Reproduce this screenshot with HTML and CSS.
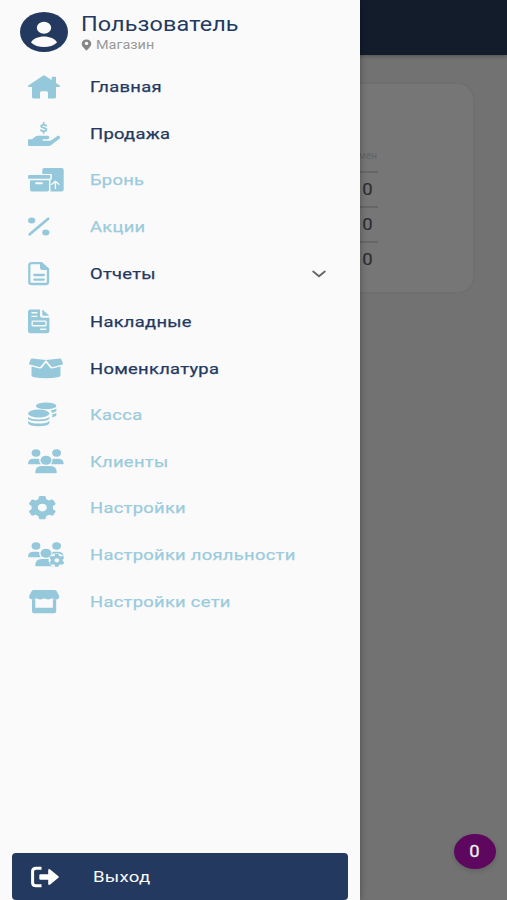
FILE: index.html
```html
<!DOCTYPE html>
<html lang="ru">
<head>
<meta charset="utf-8">
<meta name="viewport" content="width=device-width, initial-scale=1">
<title>Меню</title>
<link rel="stylesheet" href="styles.css">
</head>
<body>
<div class="app">
  <main class="page">
    <header class="topbar"></header>
    <section class="card">
      <table class="stats">
        <thead><tr><th>мен</th></tr></thead>
        <tbody><tr><td><span>0</span></td></tr><tr><td><span>0</span></td></tr><tr><td><span>0</span></td></tr></tbody>
      </table>
    </section>
  </main>
  <button class="fab"><span>0</span></button>
  <aside class="drawer">
    <div class="user">
      <svg class="avatar" viewBox="0 0 48 40"><ellipse cx="24" cy="20" rx="24" ry="20" fill="#24395f"/><ellipse cx="24" cy="15.8" rx="7.2" ry="6" fill="#fafafa"/><path d="M11 30.5c1.500-3.800 7.500-6 13-6s11.500 2.200 13 6c-3.200 3-7.800 4.500-13 4.500s-9.800-1.500-13-4.500z" fill="#fafafa"/></svg>
      <div>
        <div class="name"><span>Пользователь</span></div>
        <div class="shop"><svg class="pin" viewBox="0 0 12 13"><path fill-rule="evenodd" d="M6 .5C2.800.500.800 2.400.800 5c0 3 3.500 5.500 5.200 7.800C7.700 10.500 11.200 8 11.200 5 11.200 2.400 9.200.500 6 .500zM6 3a2 1.800 0 1 1 0 3.600A2 1.800 0 0 1 6 3z"/></svg><span>Магазин</span></div>
      </div>
    </div>
    <nav class="menu">
      <a class="item"><svg class="icon" viewBox="0 0 40 28"><path d="M17 2.700q1-.8 2 0L25.700 7V4.600q0-.8.800-.8h2.700q.8 0 .8.800v5.300l3.700 2.500q.6.500.3 1.200-.2.500-1 .5h-3v9.800q0 1.600-1.800 1.600H22v-5.800q0-1.500-1.500-1.500h-5q-1.500 0-1.500 1.500v5.800H7.800Q6 25.500 6 23.900v-9.800H3q-.8 0-1-.5-.3-.7.300-1.200z"/></svg><span>Главная</span></a>
      <a class="item"><svg class="icon" viewBox="0 0 40 28"><g transform="translate(2 -1) scale(.0556 .0525)"><path d="M565.300 328.100c-11.800-10.700-30.200-10-42.600 0L430.300 402c-11.300 9.100-25.400 14-40 14H272c-8.800 0-16-7.200-16-16s7.200-16 16-16h78.300c15.900 0 30.700-10.900 33.300-26.600 3.300-20-12.100-37.400-31.600-37.400H192c-27 0-53.100 9.300-74.100 26.300L71.400 384H16c-8.800 0-16 7.200-16 16v96c0 8.800 7.200 16 16 16h356.800c14.500 0 28.600-4.900 40-14L564 377c15.200-12.100 16.400-35.300 1.300-48.900z"/></g><path class="line" d="M20.300 5.600c-1-1-5.200-1.200-5.200.7 0 2 5.400 1.200 5.400 3.300 0 2-4.600 1.900-5.700.5M17.700 2.600v1.800M17.700 11v1.900" stroke-width="1.700"/></svg><span>Продажа</span></a>
      <a class="item off"><svg class="icon" viewBox="0 0 40 28"><path d="M18.300 2h17.200q2.200 0 2.200 2v19.500q0 2-2.200 2H24.500V13.600h1.300V8h-9.500V4q0-2 2-2z"/><rect x="2" y="9" width="22.300" height="3.700" rx="1"/><path fill-rule="evenodd" d="M4 14.200h19v9.600q0 1.700-1.700 1.700H5.700Q4 25.500 4 23.800zm6 2.100q-.8 0-.8 1t.8 1h6q.8 0 .8-1t-.8-1z"/><path class="cut" d="M29.400 22.500v-7M25.900 18.300l3.500-3 3.500 3" stroke-width="1.400"/></svg><span>Бронь</span></a>
      <a class="item off"><svg class="icon" viewBox="0 0 40 28"><ellipse cx="5.700" cy="7.500" rx="3.600" ry="3"/><ellipse cx="19.800" cy="19.400" rx="3.600" ry="3"/><path class="line" d="M3.700 21.300 22.200 5.800" stroke-width="2.700"/></svg><span>Акции</span></a>
      <a class="item wide"><svg class="icon" viewBox="0 0 40 28"><path class="line" d="M5.800 3.100h9.500l6.700 6v12.800q0 2.100-2.500 2.100H5.800q-2.500 0-2.500-2.100V5.200q0-2.100 2.500-2.100zM8.300 15h9.500M8.300 19.600h9.500" stroke-width="2.300"/><path d="M14 3h2l7 6v1h-6.500Q14 10 14 8z"/></svg><span>Отчеты</span><svg class="chevron" viewBox="0 0 14 8"><path d="m1.200 1.500 5.800 4.700 5.800-4.700"/></svg></a>
      <a class="item"><svg class="icon" viewBox="0 0 40 28"><path d="M4.600 1.500H14v6q0 2.200 2.400 2.200h7V23q0 2.200-2.600 2.200H4.600Q2 25.200 2 23V3.700q0-2.200 2.600-2.200zM16.300 1.500l7 6.200h-5.700q-1.300 0-1.300-1.200z"/><path class="cut" d="M6 4.800h4.800M6 8.400h4.800M14.700 21.300h5M6.800 13.100h12.600q.6 0 .6.600v3.400q0 .6-.6.600H6.800q-.6 0-.6-.6v-3.400q0-.6.600-.6z" stroke-width="1.400"/></svg><span>Накладные</span></a>
      <a class="item"><svg class="icon" viewBox="0 0 40 28"><path d="M4.800 4.300q.2-.8 1.200-.7L20 5l14-1.400q1-.1 1.300.7L37 8.400q.4.900-.8 1.200l-9.300 2.300q-1.100.3-1.700-.6L20 5l-5.200 6.300q-.6.900-1.700.6L3.800 9.600Q2.600 9.300 3 8.400z"/><path d="M5.500 11.600 13.400 13.500q1.800.3 2.800-1L20 7.800l3.800 4.700q1 1.300 2.800 1l7.900-1.900v8.600q0 1.300-1.600 1.700-12.900 2.600-25.800 0-1.600-.4-1.600-1.700z"/></svg><span>Номенклатура</span></a>
      <a class="item off"><svg class="icon" viewBox="0 0 40 28"><ellipse cx="20.100" cy="4.900" rx="10.300" ry="3.400"/><path d="M24.600 9.400q3.700-.5 5.800-2v1.900q0 1.700-4.300 2.600-.3-1.300-1.500-2.500zM26.300 13.300q2.500-.4 4.100-1.500v2q0 1.600-4.100 2.600zM2 16q3 2.500 10.700 2.500T23.400 16v1.500q-1.100 2.800-10.700 2.800T2 17.500zM2 19.900q3 2.600 10.700 2.600t10.700-2.600v2.200q-1.100 3.200-10.700 3.200T2 22.100z"/><ellipse cx="12.700" cy="12.500" rx="10.700" ry="4"/></svg><span>Касса</span></a>
      <a class="item off"><svg class="icon" viewBox="0 0 40 28"><ellipse cx="10" cy="5" rx="4.400" ry="3.700"/><ellipse cx="30.600" cy="5" rx="4.400" ry="3.700"/><ellipse cx="20" cy="12.200" rx="5.500" ry="4.500"/><path d="M2 15.500q.3-4.800 5.500-4.800h4q1 0 1.700.4-.5 2.900 1.700 5.100H2.800q-.8 0-.8-.7zM37.700 15.500q-.3-4.800-5.500-4.800h-4q-1 0-1.700.4.500 2.900-1.700 5.100h12.100q.8 0 .8-.7zM9.200 24.300q.3-6.200 6.300-6.200h9q6 0 6.300 6.200 0 1-1.200 1H10.400q-1.200 0-1.200-1z"/></svg><span>Клиенты</span></a>
      <a class="item off"><svg class="icon" viewBox="0 0 40 28"><use href="#gear" transform="translate(16.300 13.600) scale(1.160 1)"/></svg><span>Настройки</span></a>
      <a class="item off"><svg class="icon" viewBox="0 0 40 28"><ellipse cx="10" cy="5" rx="4.400" ry="3.700"/><ellipse cx="30.600" cy="5" rx="4.400" ry="3.700"/><ellipse cx="20" cy="12.200" rx="5.500" ry="4.500"/><path d="M2 15.500q.3-4.800 5.500-4.800h4q1 0 1.700.4-.5 2.900 1.700 5.100H2.800q-.8 0-.8-.7zM37.700 15.500q-.3-4.800-5.500-4.800h-4q-1 0-1.700.4.500 2.900-1.700 5.100h12.100q.8 0 .8-.7zM9.200 24.300q.3-6.200 6.300-6.200h9q6 0 6.300 6.200 0 1-1.200 1H10.400q-1.200 0-1.200-1z"/><ellipse class="clear" cx="30.800" cy="19.300" rx="8.200" ry="7"/><use href="#gear" transform="translate(30.800 19.300) scale(.64 .55)"/></svg><span>Настройки лояльности</span></a>
      <a class="item off"><svg class="icon" viewBox="0 0 40 28"><path d="M7.500 2h21.300q1 0 1.600.8L33 7.500q1.200 3.600-3 3.900-2.300 0-3.800-1.100-1.500 1.100-4 1.100t-4-1.100q-1.500 1.100-4 1.100t-4-1.100q-1.500 1.100-3.900 1.100-4.200-.3-3-3.900l2.600-4.700Q6.500 2 7.500 2z"/><path fill-rule="evenodd" d="M6 11q1.800.4 3.300 0v8.700h17.600V11q1.500.4 3.300 0v11.900q0 2.400-2.600 2.400h-19Q6 25.300 6 22.900z"/></svg><span>Настройки сети</span></a>
    </nav>
    <button class="exit"><svg class="exit-icon" viewBox="0 0 30 22"><path d="M11.500 2.300H6.200q-3.600 0-3.600 3v11.400q0 3 3.600 3h5.300" fill="none" stroke="#fff" stroke-width="3" stroke-linejoin="round"/><path d="M10.500 8.200h7.700V4.300q0-2 2-.9l8.200 6.800q1 .8 0 1.600l-8.200 6.800q-2 1.100-2-.9v-3.900h-7.700q-1.200 0-1.200-1V9.200q0-1 1.200-1z" fill="#fff"/></svg><span>Выход</span></button>
  </aside>
</div>
<svg class="defs"><defs><path id="gear" fill-rule="evenodd" d="M-1.900-11.700h3.800q.8 0 1 .8l.5 2.600q1.100.4 2.200 1.200l2.600-.9q.8-.2 1.200.4l1.900 3.200q.4.700-.2 1.200L9.100-1.400q.2 1.400 0 2.800l2 1.800q.6.500.2 1.200l-1.900 3.200q-.4.600-1.200.4l-2.600-.9Q4.500 7.900 3.400 8.300l-.5 2.600q-.2.800-1 .8h-3.800q-.8 0-1-.8l-.5-2.600q-1.100-.4-2.200-1.200l-2.600.9q-.8.200-1.200-.4l-1.900-3.200q-.4-.7.200-1.200l2-1.800q-.2-1.400 0-2.800l-2-1.800q-.6-.5-.2-1.200l1.900-3.200q.4-.6 1.200-.4l2.600.9q1.100-.8 2.200-1.200l.5-2.600q.2-.8 1-.8zM0-3.900a3.900 3.900 0 1 0 0 7.800 3.900 3.900 0 0 0 0-7.800z"/></defs></svg>
</body>
</html>
```
FILE: styles.css
```css
* { box-sizing: border-box; }
body { margin: 0; font-family: Roboto, "Liberation Sans", sans-serif; overflow: hidden; }
.app { display: grid; grid-template-columns: 360.400px 1fr; width: 507px; height: 900px; overflow: hidden; }
.page, .drawer { grid-row: 1; min-width: 0; }
.page { grid-column: 1 / 3; background: #727272; height: 900px; }
.topbar { height: 55px; background: #121c2b; box-shadow: 0 1px 4px rgba(0, 0, 0, .3); }
.card { width: 440px; height: 210px; margin: 28px 0 0 34px; border-radius: 16px; background: #767676; border: 1px solid #6f6f6f; box-shadow: 0 0 3px rgba(0, 0, 0, .04); padding: 62px 95px 0 0; }
.stats { width: 100%; border-collapse: collapse; }
.stats th { height: 26px; padding: 0 1px 6px 0; text-align: right; vertical-align: middle; font-size: 10px; font-weight: 400; color: #606565; }
.stats td { height: 35px; padding: 0 6px 0 0; border-top: 2px solid #666; text-align: right; font-size: 16px; line-height: 20px; color: #2c2e32; }
.stats span, .fab span { display: inline-block; transform: scaleX(1.15); }
.stats span { -webkit-text-stroke: .2px; }
.fab { position: absolute; left: 453.500px; top: 834px; width: 42px; height: 35px; padding: 0; border: 0; border-radius: 50%; background: #5d085e; color: #eee; font: 400 16px Roboto, sans-serif; -webkit-text-stroke: .3px; box-shadow: 0 2px 5px rgba(0, 0, 0, .15); }
.drawer { grid-column: 1; position: relative; display: flex; flex-direction: column; height: 900px; background: #fafafa; box-shadow: 0 0 7px rgba(0, 0, 0, .35); }
.user { display: flex; height: 63.800px; padding: 12px 0 0 19.500px; gap: 13.500px; }
.avatar { width: 48px; height: 40px; }
.name { height: 24px; font-size: 19.500px; line-height: 25px; color: #24395f; letter-spacing: .1px; white-space: nowrap; }
.name span, .shop span, .item span, .exit span { display: inline-block; transform: scaleX(1.2); transform-origin: left center; white-space: nowrap; }
.shop { display: flex; align-items: center; gap: 4px; height: 17px; font-size: 12px; line-height: 16px; color: #999; }
.pin { width: 11px; height: 12px; fill: #858585; }
.menu { display: flex; flex-direction: column; }
.item { display: flex; align-items: center; height: 46.600px; padding-left: 26px; color: #24395f; font-size: 15.300px; font-weight: 400; letter-spacing: .24px; -webkit-text-stroke: .25px; }
.wide { height: 48.500px; }
.off { color: #9bcbdc; }
.icon { width: 40px; height: 28px; margin-right: 24px; fill: #94c8da; flex: none; }
.line { fill: none; stroke: #94c8da; stroke-linecap: round; stroke-linejoin: round; }
.cut { fill: none; stroke: #fafafa; stroke-linecap: round; stroke-linejoin: round; }
.clear { fill: #fafafa; }
.chevron { width: 14px; height: 8px; margin: 0 34.500px 0 auto; fill: none; stroke: #666; stroke-width: 1.900; stroke-linecap: round; }
.exit { display: flex; align-items: center; width: 336px; height: 47px; margin: auto 0 0 12.400px; padding: 0 0 0 17.500px; border: 0; border-radius: 4px; background: #24395f; color: #fafafa; font: 400 15.500px Roboto, sans-serif; letter-spacing: .2px; }
.exit-icon { width: 30px; height: 22px; margin-right: 33px; }
.defs { position: absolute; width: 0; height: 0; }
```
